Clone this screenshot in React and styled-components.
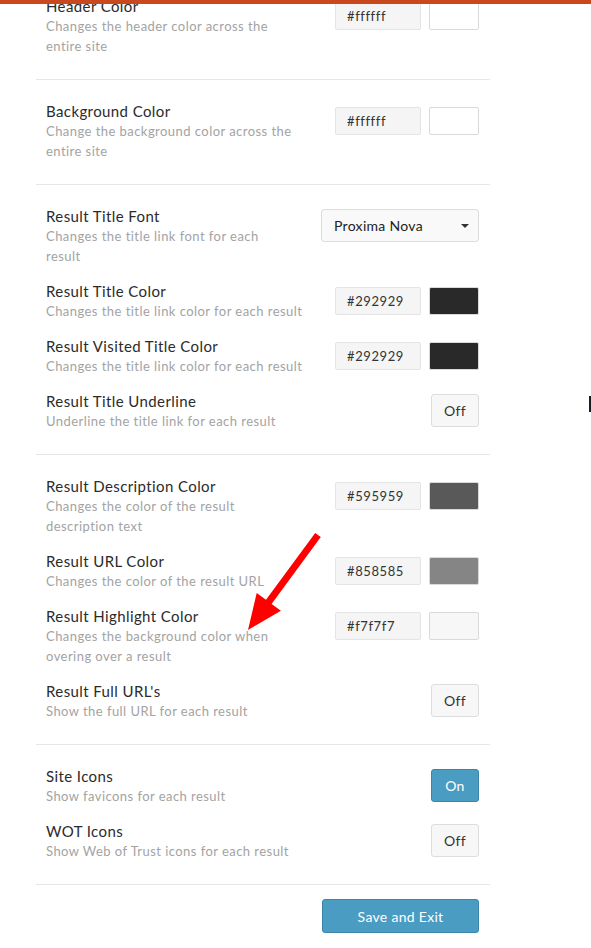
import styled, { createGlobalStyle } from "styled-components";

const GlobalStyle = createGlobalStyle`
  html, body {
    margin: 0;
    padding: 0;
    background: #ffffff;
    font-family: Lato, "Open Sans", "Liberation Sans", sans-serif;
    overflow: hidden;
  }
`;

// line breaks follow the reference wrapping
const sections = [
  [
    {
      title: "Header Color",
      desc: "Changes the header color across the\nentire site",
      control: { type: "color", value: "#ffffff" },
    },
  ],
  [
    {
      title: "Background Color",
      desc: "Change the background color across the\nentire site",
      control: { type: "color", value: "#ffffff" },
    },
  ],
  [
    {
      title: "Result Title Font",
      desc: "Changes the title link font for each\nresult",
      control: { type: "select", value: "Proxima Nova" },
    },
    {
      title: "Result Title Color",
      desc: "Changes the title link color for each result",
      control: { type: "color", value: "#292929" },
    },
    {
      title: "Result Visited Title Color",
      desc: "Changes the title link color for each result",
      control: { type: "color", value: "#292929" },
    },
    {
      title: "Result Title Underline",
      desc: "Underline the title link for each result",
      control: { type: "toggle", on: false },
    },
  ],
  [
    {
      title: "Result Description Color",
      desc: "Changes the color of the result\ndescription text",
      control: { type: "color", value: "#595959" },
    },
    {
      title: "Result URL Color",
      desc: "Changes the color of the result URL",
      control: { type: "color", value: "#858585" },
    },
    {
      title: "Result Highlight Color",
      desc: "Changes the background color when\novering over a result",
      control: { type: "color", value: "#f7f7f7" },
    },
    {
      title: "Result Full URL's",
      desc: "Show the full URL for each result",
      control: { type: "toggle", on: false },
    },
  ],
  [
    {
      title: "Site Icons",
      desc: "Show favicons for each result",
      control: { type: "toggle", on: true },
    },
    {
      title: "WOT Icons",
      desc: "Show Web of Trust icons for each result",
      control: { type: "toggle", on: false },
    },
  ],
];

function Control({ control }) {
  if (control.type === "color") {
    return (
      <ColorGroup>
        <HexInput readOnly value={control.value} />
        <Swatch $color={control.value} />
      </ColorGroup>
    );
  }
  if (control.type === "select") {
    return (
      <Select>
        <span>{control.value}</span>
        <Caret />
      </Select>
    );
  }
  return <Toggle $on={control.on}>{control.on ? "On" : "Off"}</Toggle>;
}

export default function App() {
  return (
    <>
      <GlobalStyle />
      <TopBar />
      <Page>
        {sections.map((rows, i) => (
          <Section key={i}>
            {rows.map((row) => (
              <Row key={row.title}>
                <Text>
                  <Title>{row.title}</Title>
                  <Desc>{row.desc}</Desc>
                </Text>
                <ControlBox>
                  <Control control={row.control} />
                </ControlBox>
              </Row>
            ))}
          </Section>
        ))}
        <Footer>
          <SaveBtn>Save and Exit</SaveBtn>
        </Footer>
      </Page>
      <Arrow width="90" height="110" viewBox="0 0 90 110">
        <polygon
          points="80.8,9.1 31.6,75.9 40.9,82.7 8,102 16.7,64.9 26,71.7 75.2,4.9"
          fill="#ff0000"
        />
      </Arrow>
      <Cursor />
    </>
  );
}

const TopBar = styled.div`
  position: fixed;
  top: 0;
  left: 0;
  right: 0;
  height: 4px;
  background: #c9481d;
  z-index: 5;
`;

const Page = styled.div`
  width: 454px;
  margin: -25px 0 0 36px;
  padding-bottom: 16px;
`;

const Section = styled.div`
  display: flex;
  flex-direction: column;
  gap: 15px;
  padding: 21px 11px 23px 10px;
  border-bottom: 1px solid #e6e6e6;
`;

const Row = styled.div`
  display: flex;
  align-items: flex-start;
  justify-content: space-between;
  gap: 20px;
`;

const Text = styled.div`
  flex: 1;
  min-width: 0;
`;

const Title = styled.div`
  font-size: 15px;
  line-height: 20px;
  letter-spacing: 0.4px;
  color: #2b2b2b;
`;

const Desc = styled.div`
  font-size: 13px;
  line-height: 20px;
  letter-spacing: 0.45px;
  color: #a3a3a3;
  white-space: pre-line;
`;

const ControlBox = styled.div`
  height: 39px;
  display: flex;
  align-items: center;
  flex-shrink: 0;
`;

const ColorGroup = styled.div`
  display: flex;
  gap: 8px;
`;

const HexInput = styled.input`
  box-sizing: border-box;
  width: 86px;
  height: 28px;
  padding: 0 11px;
  border: 1px solid #e4e4e4;
  border-radius: 2px;
  background: #f5f5f5;
  font-family: inherit;
  font-size: 13px;
  letter-spacing: 0.6px;
  color: #333333;
  outline: none;
`;

const Swatch = styled.div`
  box-sizing: border-box;
  width: 50px;
  height: 28px;
  border: 1px solid #d9d9d9;
  border-radius: 2px;
  background: ${(p) => p.$color};
`;

const Select = styled.div`
  box-sizing: border-box;
  width: 158px;
  height: 33px;
  display: flex;
  align-items: center;
  justify-content: space-between;
  padding: 0 9px 0 12px;
  border: 1px solid #dcdcdc;
  border-radius: 3px;
  background: #f9f9f9;
  font-size: 14px;
  letter-spacing: 0.3px;
  color: #222222;
`;

const Caret = styled.span`
  width: 0;
  height: 0;
  border-left: 4px solid transparent;
  border-right: 4px solid transparent;
  border-top: 4px solid #333333;
`;

const Toggle = styled.div`
  box-sizing: border-box;
  width: 48px;
  height: 33px;
  display: flex;
  align-items: center;
  justify-content: center;
  border: 1px solid ${(p) => (p.$on ? "#3a86aa" : "#dddddd")};
  border-radius: 3px;
  background: ${(p) => (p.$on ? "#4a9cc2" : "#f7f7f7")};
  color: ${(p) => (p.$on ? "#ffffff" : "#333333")};
  font-size: 14px;
  letter-spacing: 0.3px;
`;

const Footer = styled.div`
  display: flex;
  justify-content: flex-end;
  padding: 14px 11px 0 0;
`;

const SaveBtn = styled.button`
  box-sizing: border-box;
  width: 157px;
  height: 34px;
  border: 1px solid #3a86aa;
  border-radius: 3px;
  background: #4a9cc2;
  color: #ffffff;
  font-family: inherit;
  font-size: 14px;
  letter-spacing: 0.3px;
  cursor: pointer;
`;

const Arrow = styled.svg`
  position: absolute;
  left: 240px;
  top: 528px;
  pointer-events: none;
`;

const Cursor = styled.div`
  position: absolute;
  left: 589px;
  top: 396px;
  width: 2px;
  height: 16px;
  background: #1b1b24;
`;
